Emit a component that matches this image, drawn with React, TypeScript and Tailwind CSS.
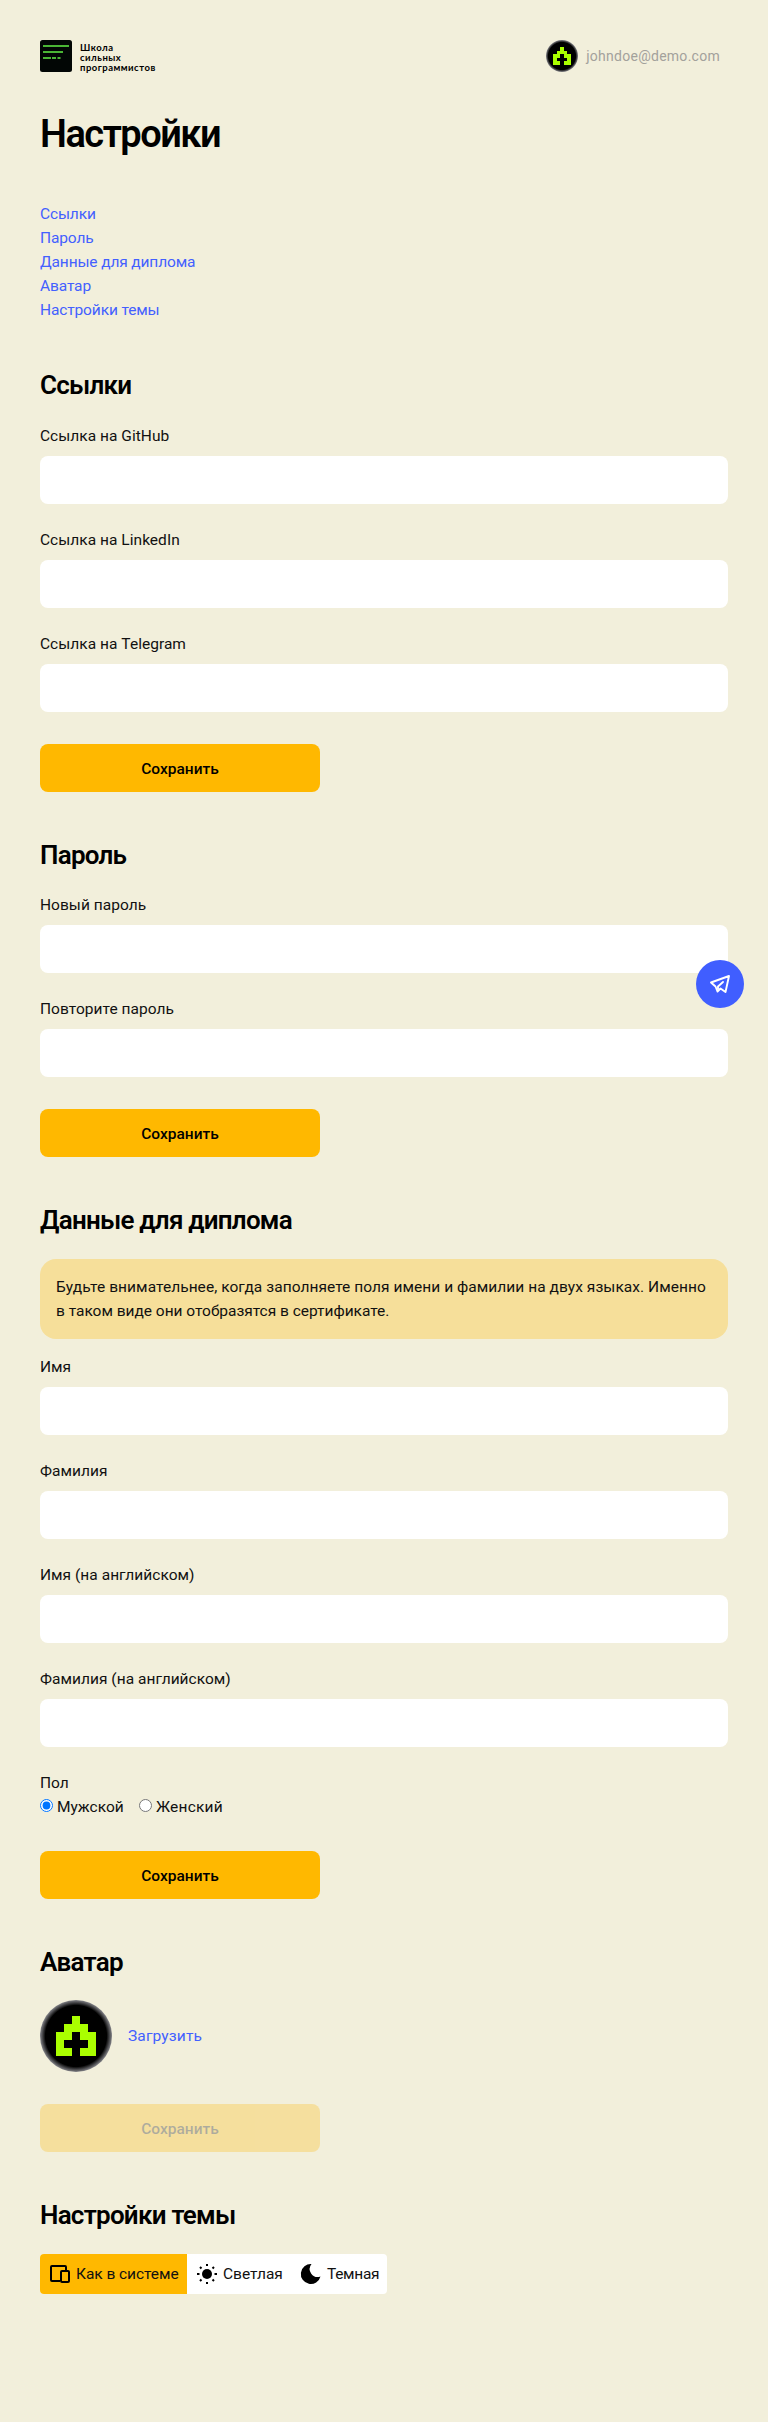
import React from "react";

function AvatarImage({ size }: { size: number }) {
  return (
    <svg width={size} height={size} viewBox="0 0 72 72" className="shrink-0">
      <defs>
        <radialGradient id={`rim${size}`}>
          <stop offset="0.85" stopColor="#000" />
          <stop offset="1" stopColor="#85858a" />
        </radialGradient>
      </defs>
      <circle cx="36" cy="36" r="36" fill={`url(#rim${size})`} />
      <path
        shapeRendering="crispEdges"
        fill="#aaff00"
        d="M32 16h8v8h8v8h8v24H40v-8h8v-8h-8v-8h-8v8h-8v8h8v8H16V32h8v-8h8z"
      />
    </svg>
  );
}

function Section({ title, children }: { title: string; children: React.ReactNode }) {
  return (
    <section className="pt-12">
      <h2 className="mb-5 h-[33.6px] whitespace-nowrap text-[26px] font-semibold leading-[31px] tracking-[-0.75px] text-black">{title}</h2>
      {children}
    </section>
  );
}

function Field({ label }: { label: string }) {
  return (
    <label className="mb-6 block">
      <span className="mb-2 block h-6 tracking-[0.03px]">{label}</span>
      <input className="block h-12 w-full rounded-lg bg-white px-4 outline-none" />
    </label>
  );
}

function Save({ disabled = false }: { disabled?: boolean }) {
  return (
    <button
      disabled={disabled}
      className="mt-8 block h-12 w-[280px] rounded-lg bg-[#ffb800] pt-0.5 text-[15.5px] font-medium text-black disabled:opacity-[0.28]"
    >
      Сохранить
    </button>
  );
}

export default function App() {
  return (
    <div className="min-h-[2422px] bg-[#f2efdb] px-10 pt-10 font-[Roboto,sans-serif] text-[15.5px] leading-6 text-[#111]">
      <header className="flex h-8 items-center justify-between pr-2">
        <div className="flex items-center gap-2">
          <svg width="32" height="32" viewBox="0 0 32 32">
            <rect width="32" height="32" rx="2.5" fill="#020605" />
            <path d="M3 6h26M3 12h20M3 18h8M12 18h4M17.5 18h3" stroke="#4ab535" strokeWidth="1.8" />
          </svg>
          <div className="pt-1 font-[Lato,sans-serif] text-[9.5px] font-bold leading-[9.7px] tracking-[0.5px] text-black">
            <div>Школа</div>
            <div>сильных</div>
            <div>программистов</div>
          </div>
        </div>
        <div className="flex items-center gap-2">
          <AvatarImage size={32} />
          <span className="text-[14px] tracking-[0.27px] text-[#a3a19b]">johndoe@demo.com</span>
        </div>
      </header>
      <h1 className="mt-[38px] h-[48px] text-[38px] font-semibold leading-[48px] tracking-[-1.5px] text-black">Настройки</h1>
      <nav className="mt-11 flex flex-col items-start tracking-[-0.13px] text-[#4360ff]">
        <a>Ссылки</a>
        <a>Пароль</a>
        <a>Данные для диплома</a>
        <a>Аватар</a>
        <a>Настройки темы</a>
      </nav>
      <Section title="Ссылки">
        <Field label="Ссылка на GitHub" />
        <Field label="Ссылка на LinkedIn" />
        <Field label="Ссылка на Telegram" />
        <Save />
      </Section>
      <Section title="Пароль">
        <Field label="Новый пароль" />
        <Field label="Повторите пароль" />
        <Save />
      </Section>
      <Section title="Данные для диплома">
        <div className="mb-4 h-20 whitespace-nowrap rounded-2xl bg-[#f6df9a] p-4">
          <div className="tracking-[0.05px]">Будьте внимательнее, когда заполняете поля имени и фамилии на двух языках. Именно</div>
          <div className="tracking-[-0.02px]">в таком виде они отобразятся в сертификате.</div>
        </div>
        <Field label="Имя" />
        <Field label="Фамилия" />
        <Field label="Имя (на английском)" />
        <Field label="Фамилия (на английском)" />
        <div className="h-6">Пол</div>
        <div className="flex h-6 gap-4">
          <label className="flex gap-1">
            <input type="radio" name="sex" defaultChecked className="mt-1 h-[13px] w-[13px]" />
            <span className="w-[66px]">Мужской</span>
          </label>
          <label className="flex gap-1">
            <input type="radio" name="sex" className="mt-1 h-[13px] w-[13px]" />
            <span className="tracking-[0.2px]">Женский</span>
          </label>
        </div>
        <Save />
      </Section>
      <Section title="Аватар">
        <div className="flex items-center gap-4">
          <AvatarImage size={72} />
          <span className="tracking-[0.15px] text-[#4360ff]">Загрузить</span>
        </div>
        <Save disabled />
      </Section>
      <Section title="Настройки темы">
        <div className="flex h-10 w-[347px] overflow-hidden whitespace-nowrap rounded bg-white">
          <div className="flex w-[147px] items-center gap-1 bg-[#ffb800] pl-2">
            <svg width="24" height="24" viewBox="0 0 24 24" fill="none" stroke="#000" strokeWidth="2" strokeLinejoin="round" className="shrink-0">
              <path d="M12 19H4a1 1 0 0 1-1-1V5a1 1 0 0 1 1-1h13a1 1 0 0 1 1 1v3" />
              <rect x="13" y="9" width="8" height="11" rx="1" />
            </svg>
            <span className="tracking-[-0.05px]">Как в системе</span>
          </div>
          <div className="flex w-[104px] items-center gap-1 pl-2">
            <svg width="24" height="24" viewBox="0 0 24 24" className="shrink-0">
              <circle cx="12" cy="12" r="5" />
              <path
                d="M12 2v2M12 20v2M2 12h2.5M19.500 12H22M5 5l1.500 1.500M17.500 17.500L19 19M5 19l1.500-1.500M17.500 6.500L19 5"
                stroke="#000"
                strokeWidth="2"
              />
            </svg>
            <span>Светлая</span>
          </div>
          <div className="flex items-center gap-1 pl-2">
            <svg width="24" height="24" viewBox="0 0 24 24" className="shrink-0">
              <path d="M12.500 2A10 10 0 1 0 21.500 14.500A8 8 0 0 1 12.500 2Z" />
            </svg>
            <span className="tracking-[-0.3px]">Темная</span>
          </div>
        </div>
      </Section>
      <a className="fixed left-[696px] top-[960px] flex h-12 w-12 items-center justify-center rounded-full bg-[#405eff]">
        <svg width="24" height="24" viewBox="0 0 24 24" fill="none" stroke="#fff" strokeWidth="1.9" strokeLinejoin="round" strokeLinecap="round">
          <path d="M3 10.500L21 4L17.500 20L12.500 16.500L9.500 19.500L7.500 14.500Z" />
          <path d="M10 17V14.500L15 10" />
        </svg>
      </a>
    </div>
  );
}
